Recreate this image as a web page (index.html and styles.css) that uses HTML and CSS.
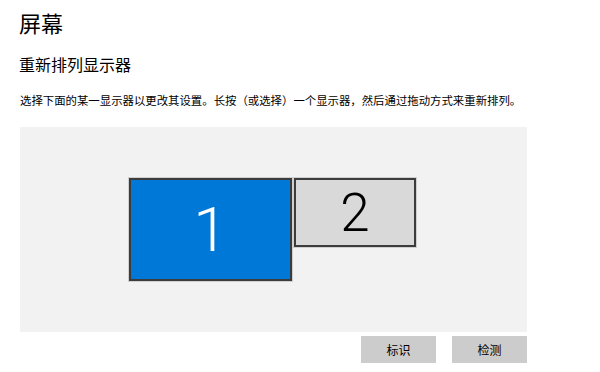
FILE: index.html
```html
<!DOCTYPE html>
<html>
<head>
    <title>屏幕</title>
    <meta charset="UTF-8">
    <link rel="stylesheet" href="styles.css">
</head>
<body>
    <h1>屏幕</h1>
    <h2>重新排列显示器</h2>
    <p class="hint">选择下面的某一显示器以更改其设置。长按（或选择）一个显示器，然后通过拖动方式来重新排列。</p>

    <div class="arrange">
        <div class="monitor primary">1</div>
        <div class="monitor second">2</div>
    </div>

    <div class="actions">
        <button>标识</button>
        <button>检测</button>
    </div>
</body>
</html>
```

FILE: styles.css
```css
body {
    margin: 0;
    padding: 0 20px 0 19px;
    background: #fff;
    color: #000;
    font-family: "Noto Sans CJK SC", "Noto Sans", sans-serif;
}
h1 {
    margin: 0;
    padding-top: 7px;
    font-size: 22px;
    font-weight: normal;
    line-height: 30px;
}
h2 {
    margin: 16px 0 0;
    font-size: 16px;
    font-weight: normal;
    line-height: 22px;
}
.hint {
    margin: 17px 0 0 1px;
    font-size: 11.4px;
    line-height: 16px;
    white-space: nowrap;
}
.arrange {
    position: relative;
    width: 507px;
    height: 205px;
    margin: 19px 0 0 1px;
    background: #f2f2f2;
}
.monitor {
    position: absolute;
    top: 51px;
    box-sizing: border-box;
    border: 2px solid #3c3c3c;
    box-shadow: 0 0 0 1px #cfcfcf;
    display: flex;
    align-items: center;
    justify-content: center;
    font-family: Roboto, "Open Sans", sans-serif;
    font-weight: 300;
}
.primary {
    left: 109px;
    width: 163px;
    height: 103px;
    background: #0078d7;
    color: #fff;
    font-size: 62px;
}
.second {
    left: 274px;
    width: 122px;
    height: 69px;
    background: #d9d9d9;
    color: #000;
    font-size: 53px;
}
.actions {
    display: flex;
    justify-content: flex-end;
    gap: 16px;
    width: 508px;
    margin-top: 4px;
}
button {
    width: 75px;
    height: 27px;
    padding: 0;
    border: none;
    background: #cccccc;
    color: #000;
    font-family: "Noto Sans CJK SC", sans-serif;
    font-size: 12px;
}
```
